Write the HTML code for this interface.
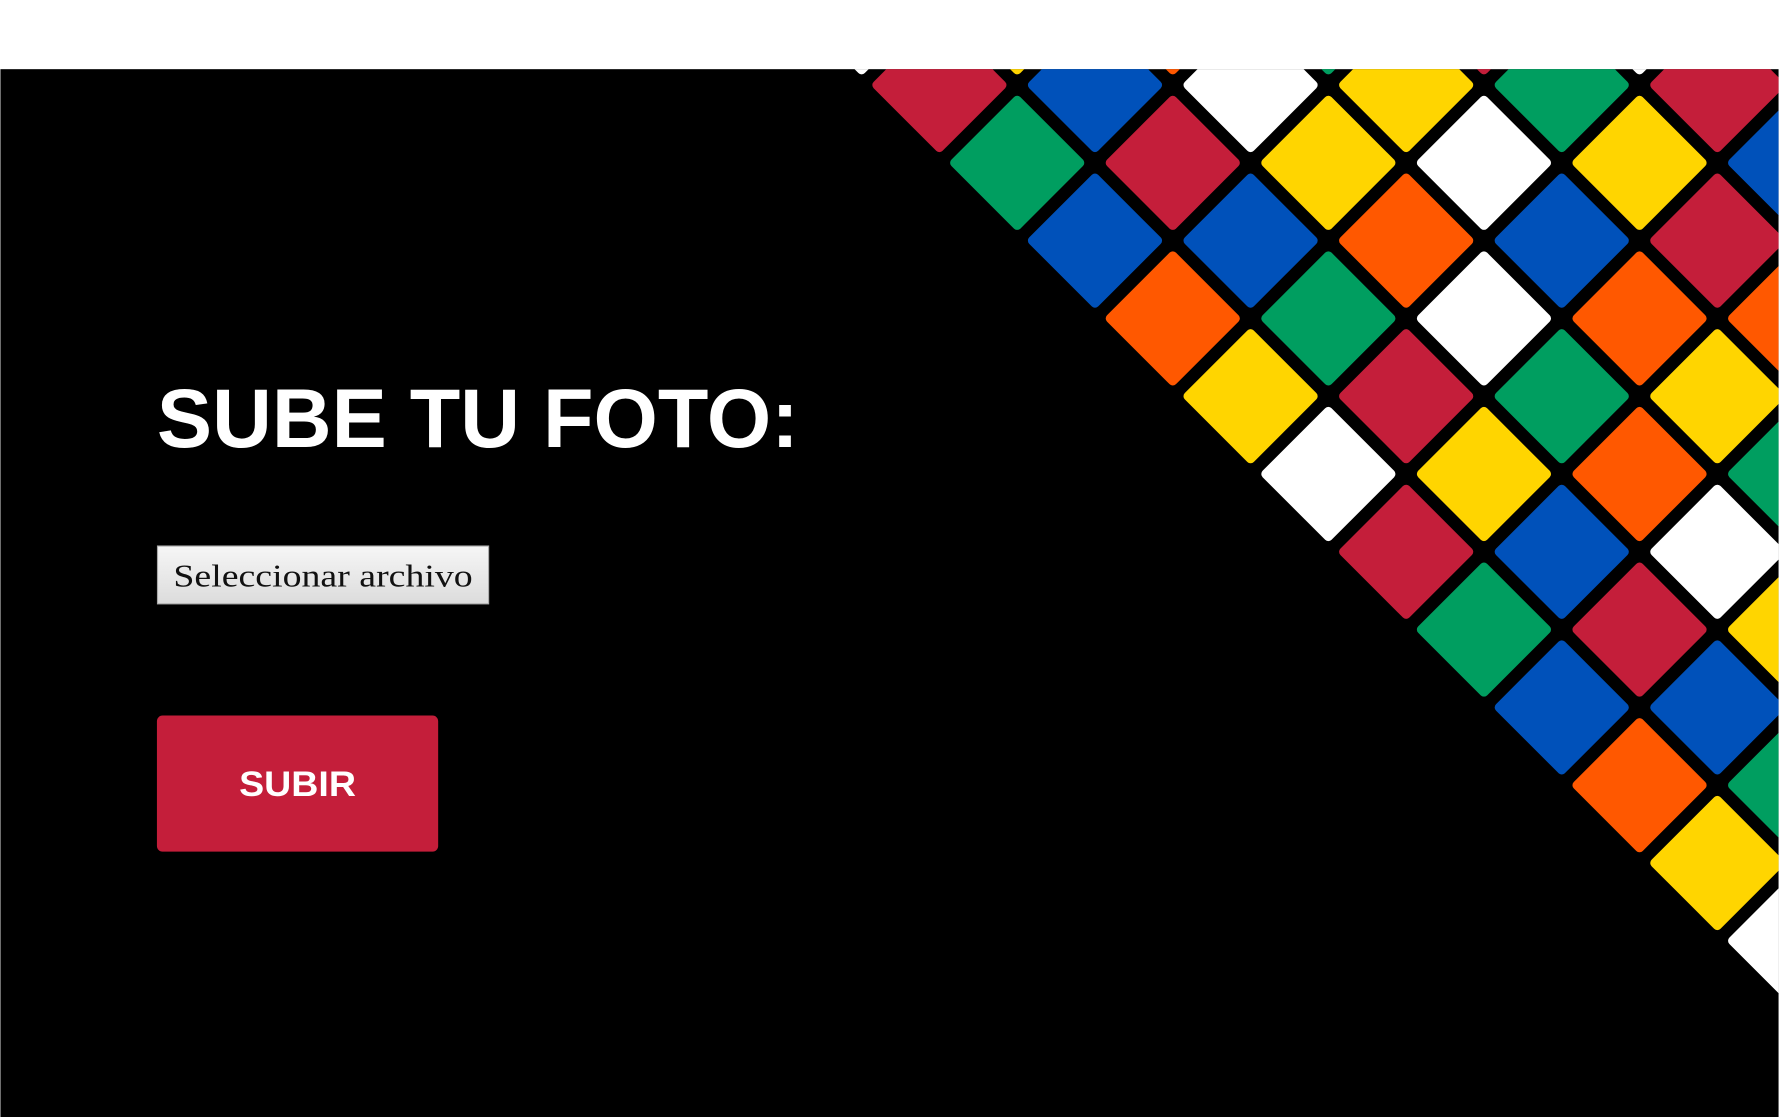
<!DOCTYPE html>
<html><head><meta charset="utf-8"><style>
html,body{margin:0;padding:0;background:#fff;}
svg{display:block;}
</style></head><body>
<svg width="1779" height="1117" viewBox="0 0 1568 985" xmlns="http://www.w3.org/2000/svg">
<defs>
<clipPath id="c"><rect x="0" y="61" width="1568" height="924"/></clipPath>
<linearGradient id="g" x1="0" y1="0" x2="0" y2="1"><stop offset="0" stop-color="#f6f6f6"/><stop offset="1" stop-color="#dcdcdc"/></linearGradient>
<g id="t"><rect x="-43" y="-43" width="86" height="86" rx="4" transform="rotate(45)"/></g>
</defs>
<rect x="0" y="0" width="1568" height="61" fill="#fff"/>
<rect x="0" y="61" width="1568" height="924" fill="#000"/>
<g clip-path="url(#c)">
<script type="text/plain"></script>
<g id="tiles"></g>
</g>
<g clip-path="url(#c)">
<!-- tiles: cx=828+68.6a, cy=75+68.6b -->
<use href="#t" x="759.4" y="6.4" fill="#fff"/>
<use href="#t" x="896.6" y="6.4" fill="#ffd500"/>
<use href="#t" x="1033.8" y="6.4" fill="#ff5800"/>
<use href="#t" x="1171" y="6.4" fill="#009e60"/>
<use href="#t" x="1308.2" y="6.4" fill="#c41e3a"/>
<use href="#t" x="1445.4" y="6.4" fill="#fff"/>
<use href="#t" x="1582.6" y="6.4" fill="#0051ba"/>

<use href="#t" x="828" y="75" fill="#c41e3a"/>
<use href="#t" x="965.2" y="75" fill="#0051ba"/>
<use href="#t" x="1102.4" y="75" fill="#fff"/>
<use href="#t" x="1239.6" y="75" fill="#ffd500"/>
<use href="#t" x="1376.8" y="75" fill="#009e60"/>
<use href="#t" x="1514" y="75" fill="#c41e3a"/>

<use href="#t" x="896.6" y="143.6" fill="#009e60"/>
<use href="#t" x="1033.8" y="143.6" fill="#c41e3a"/>
<use href="#t" x="1171" y="143.6" fill="#ffd500"/>
<use href="#t" x="1308.2" y="143.6" fill="#fff"/>
<use href="#t" x="1445.4" y="143.6" fill="#ffd500"/>
<use href="#t" x="1582.6" y="143.6" fill="#0051ba"/>

<use href="#t" x="965.2" y="212.2" fill="#0051ba"/>
<use href="#t" x="1102.4" y="212.2" fill="#0051ba"/>
<use href="#t" x="1239.6" y="212.2" fill="#ff5800"/>
<use href="#t" x="1376.8" y="212.2" fill="#0051ba"/>
<use href="#t" x="1514" y="212.2" fill="#c41e3a"/>

<use href="#t" x="1033.8" y="280.8" fill="#ff5800"/>
<use href="#t" x="1171" y="280.8" fill="#009e60"/>
<use href="#t" x="1308.2" y="280.8" fill="#fff"/>
<use href="#t" x="1445.4" y="280.8" fill="#ff5800"/>
<use href="#t" x="1582.6" y="280.8" fill="#ff5800"/>

<use href="#t" x="1102.4" y="349.4" fill="#ffd500"/>
<use href="#t" x="1239.6" y="349.4" fill="#c41e3a"/>
<use href="#t" x="1376.8" y="349.4" fill="#009e60"/>
<use href="#t" x="1514" y="349.4" fill="#ffd500"/>

<use href="#t" x="1171" y="418" fill="#fff"/>
<use href="#t" x="1308.2" y="418" fill="#ffd500"/>
<use href="#t" x="1445.4" y="418" fill="#ff5800"/>
<use href="#t" x="1582.6" y="418" fill="#009e60"/>

<use href="#t" x="1239.6" y="486.6" fill="#c41e3a"/>
<use href="#t" x="1376.8" y="486.6" fill="#0051ba"/>
<use href="#t" x="1514" y="486.6" fill="#fff"/>

<use href="#t" x="1308.2" y="555.2" fill="#009e60"/>
<use href="#t" x="1445.4" y="555.2" fill="#c41e3a"/>
<use href="#t" x="1582.6" y="555.2" fill="#ffd500"/>

<use href="#t" x="1376.8" y="623.8" fill="#0051ba"/>
<use href="#t" x="1514" y="623.8" fill="#0051ba"/>

<use href="#t" x="1445.4" y="692.4" fill="#ff5800"/>
<use href="#t" x="1582.6" y="692.4" fill="#009e60"/>

<use href="#t" x="1514" y="761" fill="#ffd500"/>
<use href="#t" x="1582.6" y="829.6" fill="#fff"/>
</g>
<text x="138" y="394" font-family="Liberation Sans, sans-serif" font-weight="bold" font-size="74" fill="#fff" textLength="566" lengthAdjust="spacingAndGlyphs">SUBE TU FOTO:</text>
<rect x="138.5" y="481.5" width="292" height="51" fill="url(#g)" stroke="#aaa"/>
<text x="284.5" y="517" text-anchor="middle" font-family="Liberation Serif, serif" font-size="28" fill="#111" textLength="264" lengthAdjust="spacingAndGlyphs">Seleccionar archivo</text>
<rect x="138" y="631" width="248" height="120" rx="5" fill="#c41e3a"/>
<text x="262" y="702" text-anchor="middle" font-family="Liberation Sans, sans-serif" font-weight="bold" font-size="31" fill="#fff" textLength="103" lengthAdjust="spacingAndGlyphs">SUBIR</text>
</svg>
</body></html>
